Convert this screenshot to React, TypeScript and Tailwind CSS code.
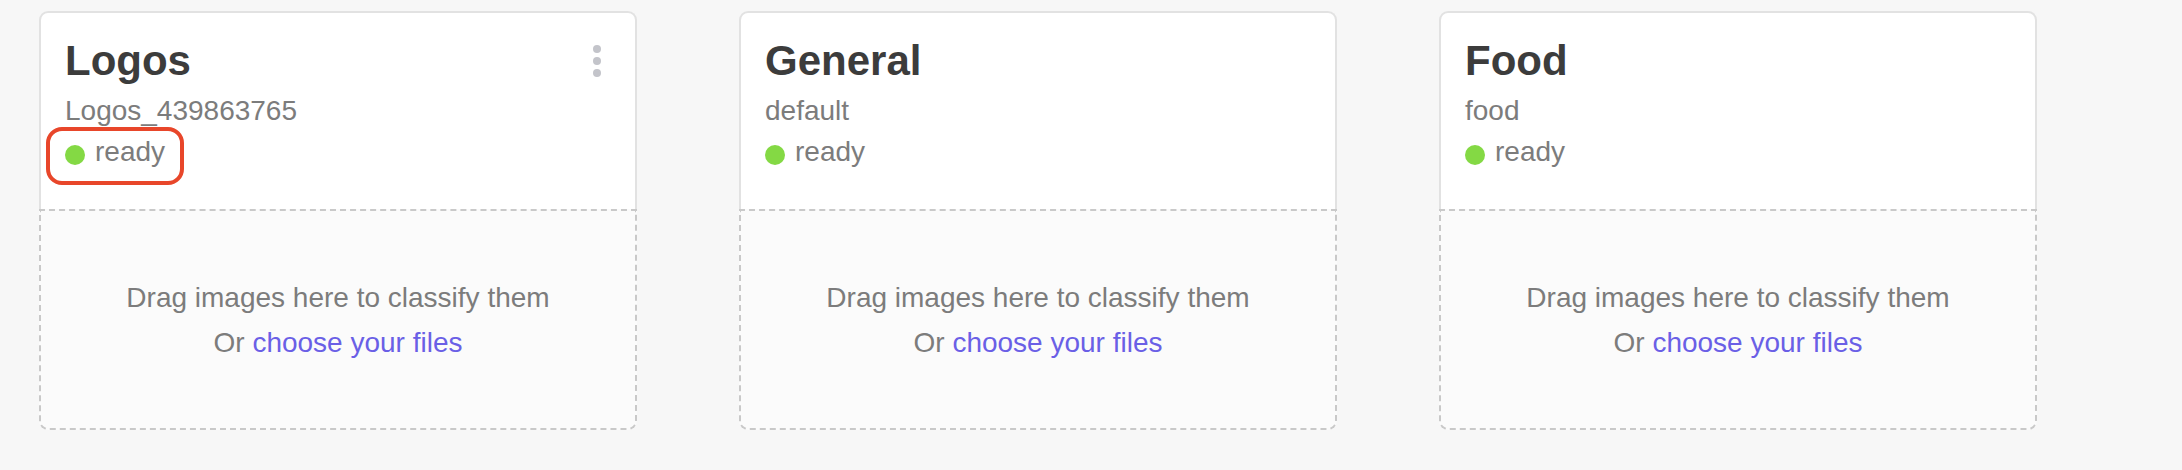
import React from "react";

type Model = {
  name: string;
  slug: string;
  status: string;
  menu?: boolean;
  highlight?: boolean;
};

const models: Model[] = [
  { name: "Logos", slug: "Logos_439863765", status: "ready", menu: true, highlight: true },
  { name: "General", slug: "default", status: "ready" },
  { name: "Food", slug: "food", status: "ready" },
];

function ModelCard({ model }: { model: Model }) {
  return (
    <div className="w-[598px] flex flex-col">
      {/* Header */}
      <div className="h-[198px] bg-white border-2 border-b-0 border-[#e2e2e2] rounded-t-[9px] pl-6 pr-[34px] pt-6">
        <div className="flex items-center justify-between h-12">
          <h2 className="text-[42px] leading-[48px] font-bold text-[#3c3c3c]">
            {model.name}
          </h2>
          {model.menu && (
            <div className="flex flex-col gap-1">
              <span className="w-2 h-2 rounded-full bg-[#c3c4ca]" />
              <span className="w-2 h-2 rounded-full bg-[#c3c4ca]" />
              <span className="w-2 h-2 rounded-full bg-[#c3c4ca]" />
            </div>
          )}
        </div>

        <p className="mt-2 text-[28px] leading-9 text-[#7c7c7c]">{model.slug}</p>

        <div className="mt-[5px] relative inline-flex items-center gap-[10px]">
          <span className="w-5 h-5 mt-[5px] rounded-full bg-[#84d944]" />
          <span className="text-[28px] leading-9 text-[#7c7c7c]">{model.status}</span>
          {model.highlight && (
            <span className="absolute -top-[7px] -bottom-[15px] -left-[19px] -right-[19px] border-4 border-[#e8462a] rounded-[16px]" />
          )}
        </div>
      </div>

      {/* Drop zone */}
      <div className="h-[221px] bg-[#fbfbfb] border-2 border-dashed border-[#c9c9c9] rounded-b-[9px] flex flex-col items-center justify-center text-[28px] leading-[45px] text-[#7c7c7c]">
        <p>Drag images here to classify them</p>
        <p>
          Or <a className="text-[#6a5fe6] cursor-pointer">choose your files</a>
        </p>
      </div>
    </div>
  );
}

export default function App() {
  return (
    <div
      className="min-h-screen w-full bg-[#f7f7f7] pl-[39px] pt-[11px]"
      style={{ fontFamily: '"Liberation Sans", Arial, sans-serif' }}
    >
      <div className="flex gap-[102px]">
        {models.map((m) => (
          <ModelCard key={m.name} model={m} />
        ))}
      </div>
    </div>
  );
}
